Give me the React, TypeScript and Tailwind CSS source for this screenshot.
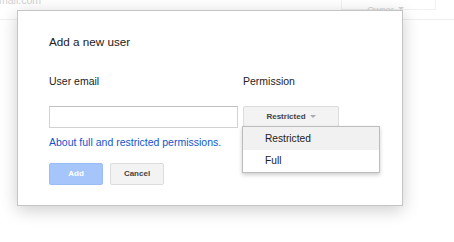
import { useState } from 'react'

const font = { fontFamily: '"Liberation Sans", Arial, sans-serif' }

export default function App() {
    const [permission, setPermission] = useState('Restricted')

    return (
        <div className="relative w-[454px] h-[242px] overflow-hidden bg-white" style={font}>
            {/* page behind the dialog */}
            <div className="flex items-start justify-between h-[20px] border-b border-[#efefef]">
                <span className="-mt-[6px] -ml-[1px] text-[10.5px] leading-[12px] text-[#cfcfcf]">mail.com</span>
                <div className="mr-[18px] w-[95px] h-[11px] -mt-px border border-[#f0f0f0] flex justify-center items-end gap-[4px] pr-[6px]">
                    <span className="text-[9px] leading-[10px] -mb-[6px] text-[#d4d4d4]">Owner</span>
                    <span className="w-0 h-0 -mb-[1px] border-x-[3px] border-x-transparent border-t-[3px] border-t-[#d4d4d4]" />
                </div>
            </div>

            {/* dialog */}
            <div className="absolute left-[17px] top-[10px] w-[386px] h-[196px] bg-white border border-[#c4c4c4] shadow-[0_4px_16px_rgba(0,0,0,0.2)] pl-[31px] pt-[24px]">
                <h2 className="text-[11.7px] leading-[14px] text-[#222] font-normal">Add a new user</h2>

                <div className="mt-[26px] grid grid-cols-[189px_96px] gap-x-[5px]">
                    <label className="text-[10.5px] leading-[12px] text-[#222]">User email</label>
                    <label className="text-[10.5px] leading-[12px] text-[#222]">Permission</label>

                    <input
                        type="text"
                        className="mt-[19px] h-[22px] border border-[#d2d2d2] border-t-[#c0c0c0] outline-none px-1 text-[10.5px]"
                    />
                    <div className="relative mt-[19px]">
                        <button className="w-[96px] h-[21px] bg-[#f3f3f3] border border-[#dcdcdc] rounded-[2px] flex items-center justify-center gap-[4px] text-[8px] font-bold text-[#444]">
                            <span>{permission}</span>
                            <span className="w-0 h-0 border-x-[3px] border-x-transparent border-t-[3px] border-t-[#aaa]" />
                        </button>
                        <div className="absolute -left-px top-[20px] w-[138px] h-[47px] bg-white border border-[#bdbdbd] shadow-[0_2px_4px_rgba(0,0,0,0.2)] z-10 flex flex-col">
                            <div
                                onClick={() => setPermission('Restricted')}
                                className="h-[23px] bg-[#f1f1f1] pl-[22px] flex items-center text-[10.2px] text-[#222] cursor-pointer"
                            >
                                Restricted
                            </div>
                            <div
                                onClick={() => setPermission('Full')}
                                className="h-[22px] pl-[22px] flex items-center text-[10.2px] text-[#222] cursor-pointer"
                            >
                                Full
                            </div>
                        </div>
                    </div>
                </div>

                <a href="#" className="block mt-[8px] text-[10.5px] leading-[12px] text-[#15c]">
                    About full and restricted permissions.
                </a>

                <div className="mt-[15px] flex gap-[7px]">
                    <button className="w-[54px] h-[22px] rounded-[2px] bg-[#a6c6fb] border border-[#9bbdf6] text-white text-[8px] font-bold">
                        Add
                    </button>
                    <button className="w-[54px] h-[22px] rounded-[2px] bg-[#f3f3f3] border border-[#dcdcdc] text-[#444] text-[8px] font-bold">
                        Cancel
                    </button>
                </div>
            </div>
        </div>
    )
}
